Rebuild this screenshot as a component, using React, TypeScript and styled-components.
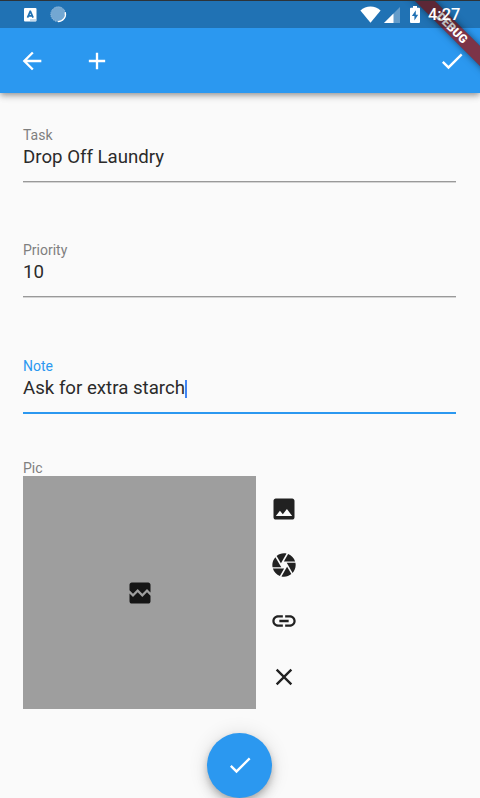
import React from 'react';
import styled, { createGlobalStyle } from 'styled-components';

const GlobalStyle = createGlobalStyle`
  * { box-sizing: border-box; }
  html, body { margin: 0; background: #fafafa; }
  body { font-family: Roboto, "Liberation Sans", sans-serif; overflow: hidden; }
`;

const Screen = styled.div`
  position: relative;
  width: 480px;
  height: 798px;
  overflow: hidden;
  display: flex;
  flex-direction: column;
  background: #fafafa;
`;

const StatusBar = styled.div`
  position: absolute;
  inset: 0 0 auto 0;
  height: 28px;
  display: flex;
  align-items: center;
  padding: 0 19px 0 23.5px;
  border-top: 1px solid #2d3338;
  background: rgba(0, 0, 0, 0.25);
  color: #fff;
  z-index: 3;
  svg { flex: none; display: block; }
`;

const Notifications = styled.div`
  display: flex;
  align-items: center;
  gap: 13px;
  flex: 1;
`;

const Clock = styled.span`
  width: 33px;
  margin-left: 8px;
  font-size: 16.4px;
  font-weight: 500;
  line-height: 20px;
  padding-top: 1px;
  white-space: nowrap;
`;

const AppBar = styled.header`
  flex: none;
  height: 93px;
  padding: 28px 14.5px 0 18px;
  display: flex;
  align-items: center;
  gap: 37px;
  background: #2b98f0;
  color: #fff;
  box-shadow: 0 2px 5px -1px rgba(0, 0, 0, 0.25), 0 4px 6px rgba(0, 0, 0, 0.14),
    0 1px 10px rgba(0, 0, 0, 0.12);
`;

const IconButton = styled.button<{ $end?: boolean }>`
  display: block;
  width: 28px;
  height: 28px;
  padding: 0;
  border: 0;
  background: none;
  color: inherit;
  margin-left: ${(p) => (p.$end ? 'auto' : '0')};
  svg { display: block; }
`;

const Banner = styled.div`
  position: absolute;
  left: 381.7px;
  top: 21.3px;
  width: 140px;
  height: 14px;
  transform: rotate(45deg);
  background: rgba(148, 23, 23, 0.776);
  box-shadow: 0 0 7px rgba(0, 0, 0, 0.5);
  color: #fff;
  font-size: 11.9px;
  font-weight: 900;
  line-height: 15px;
  text-align: center;
  z-index: 2;
`;

const Form = styled.main`
  padding: 34px 24px 0 23px;
`;

const Field = styled.label<{ $focused?: boolean }>`
  display: block;
  height: ${(p) => (p.$focused ? '56px' : '55px')};
  margin-bottom: 60px;
  border-bottom: ${(p) => (p.$focused ? '2px solid #2b98f0' : '1px solid #999')};
  box-shadow: ${(p) => (p.$focused ? 'none' : '0 1px 0 #d4d4d4')};
  color: ${(p) => (p.$focused ? '#2b98f0' : '#7f7f7f')};
  & + & { margin-bottom: 61px; }
`;

const Label = styled.span`
  display: block;
  height: 16px;
  font-size: 14px;
  line-height: 16px;
`;

const Value = styled.span`
  display: flex;
  align-items: center;
  height: 28px;
  font-size: 18.67px;
  line-height: 28px;
  color: #2b2b2b;
`;

const Caret = styled.i`
  width: 2px;
  height: 18px;
  margin-top: 1px;
  background: #4285f4;
`;

const PicSection = styled.section`
  margin-top: -15px;
  color: #7f7f7f;
`;

const PicRow = styled.div`
  display: flex;
`;

const Picture = styled.div`
  width: 233.3px;
  height: 233.3px;
  display: grid;
  place-items: center;
  background: #9e9e9e;
  color: #151515;
`;

const Actions = styled.div`
  display: flex;
  flex-direction: column;
  gap: 28px;
  padding: 18.7px 0 0 13.7px;
  color: #212121;
`;

const Fab = styled.button`
  position: absolute;
  left: 206.9px;
  top: 732.7px;
  width: 65.3px;
  height: 65.3px;
  display: grid;
  place-items: center;
  padding: 0;
  border: 0;
  border-radius: 50%;
  background: #2b98f0;
  color: #fff;
  box-shadow: 0 3px 6px -1px rgba(0, 0, 0, 0.2), 0 7px 12px rgba(0, 0, 0, 0.14),
    0 1px 20px rgba(0, 0, 0, 0.12);
`;

const paths = {
  back: 'M20 11H7.83l5.59-5.59L12 4l-8 8 8 8 1.41-1.41L7.83 13H20v-2z',
  add: 'M19 13h-6v6h-2v-6H5v-2h6V5h2v6h6v2z',
  check: 'M9 16.17L4.83 12l-1.42 1.41L9 19 21 7l-1.41-1.41z',
  image:
    'M21 19V5c0-1.1-.9-2-2-2H5c-1.1 0-2 .9-2 2v14c0 1.1.9 2 2 2h14c1.1 0 2-.9 2-2zM8.5 13.5l2.5 3.01L14.5 12l4.5 6H5l3.5-4.5z',
  broken:
    'M21 5v6.59l-3-3.01-4 4.01-4-4-4 4-3-3.01V5c0-1.1.9-2 2-2h14c1.1 0 2 .9 2 2zm-3 6.42l3 3.01V19c0 1.1-.9 2-2 2H5c-1.1 0-2-.9-2-2v-6.58l3 2.99 4-4 4 4 4-3.99z',
  camera:
    'M9.4 10.5l4.77-8.26C13.47 2.09 12.75 2 12 2c-2.4 0-4.6.85-6.32 2.25l3.66 6.35.06-.1zM21.54 9c-.92-2.92-3.15-5.26-6-6.34L11.88 9h9.66zm.26 1h-7.49l.29.5 4.76 8.25C21 16.97 22 14.61 22 12c0-.69-.07-1.35-.2-2zM8.54 12l-3.9-6.75C3.01 7.03 2 9.39 2 12c0 .69.07 1.35.2 2h7.49l-1.15-2zm-6.08 3c.92 2.92 3.15 5.26 6 6.34L12.12 15H2.46zm11.27 0l-3.9 6.76c.7.15 1.42.24 2.17.24 2.4 0 4.6-.85 6.32-2.25l-3.66-6.35-.93 1.6z',
  link:
    'M3.9 12c0-1.71 1.39-3.1 3.1-3.1h4V7H7c-2.76 0-5 2.24-5 5s2.24 5 5 5h4v-1.9H7c-1.71 0-3.1-1.39-3.1-3.1zM8 13h8v-2H8v2zm9-6h-4v1.9h4c1.71 0 3.1 1.39 3.1 3.1s-1.39 3.1-3.1 3.1h-4V17h4c2.76 0 5-2.24 5-5s-2.24-5-5-5z',
  clear:
    'M19 6.41L17.59 5 12 10.59 6.41 5 5 6.41 10.59 12 5 17.59 6.41 19 12 13.41 17.59 19 19 17.59 13.41 12z',
};

function Icon({ name }: { name: keyof typeof paths }) {
  return (
    <svg width="28" height="28" viewBox="0 0 24 24" fill="currentColor">
      <path d={paths[name]} />
    </svg>
  );
}

function KeyboardNotice() {
  return (
    <svg width="13" height="14" viewBox="0 0 13 14">
      <rect width="12.5" height="13.5" rx="1" fill="#fff" />
      <path d="M3.5 9.7L6.2 3.4h.2l2.7 6.3M4.5 7.8h3.7" fill="none" stroke="#2171b3" strokeWidth="1.7" />
      <path d="M6.5 12h1M8.5 12h1M10.5 12h1" stroke="#2171b3" strokeWidth="1" />
    </svg>
  );
}

function SyncNotice() {
  return (
    <svg width="17" height="17" viewBox="0 0 17 17">
      <circle cx="8.2" cy="8.2" r="7.4" fill="#73a7d2" />
      <circle cx="8.2" cy="8.2" r="7.4" fill="none" stroke="#a6c7e2" strokeDasharray="1 1" />
      <path d="M15.2 6.2A7.4 7.4 0 0 1 8 15.6" fill="none" stroke="#fff" strokeWidth="1.3" />
    </svg>
  );
}

function Wifi() {
  return (
    <svg width="21" height="17" viewBox="0 0 21 17">
      <path d="M.4 4.4C6-.7 15-.7 20.6 4.4L10.5 16.8z" fill="#fff" />
    </svg>
  );
}

function Signal() {
  return (
    <svg width="16" height="16" viewBox="0 0 16 16">
      <path d="M0 16L16 0v16z" fill="#649cca" />
      <path d="M0 16L9.5 6.5V16z" fill="#fff" />
    </svg>
  );
}

function Battery() {
  return (
    <svg width="10" height="17" viewBox="0 0 10 17">
      <path d="M3 0h4v1.8h2q1 0 1 1V16q0 1-1 1H1q-1 0-1-1V2.8q0-1 1-1h2z" fill="#fff" />
      <path d="M5.8 4.3L1.9 10h2.5v4.5L8.2 8.7H5.8z" fill="#2171b3" />
    </svg>
  );
}

const SystemIcons = styled.div`
  display: flex;
  align-items: center;
  & > :nth-child(2) { margin-left: 3px; }
  & > :nth-child(3) { margin-left: 10px; }
`;

const fields = [
  { label: 'Task', value: 'Drop Off Laundry' },
  { label: 'Priority', value: '10' },
  { label: 'Note', value: 'Ask for extra starch', focused: true },
];

const picActions = ['image', 'camera', 'link', 'clear'] as const;

export default function App() {
  return (
    <>
      <GlobalStyle />
      <Screen>
        <AppBar>
          <IconButton aria-label="Back"><Icon name="back" /></IconButton>
          <IconButton aria-label="Add"><Icon name="add" /></IconButton>
          <IconButton aria-label="Save" $end><Icon name="check" /></IconButton>
        </AppBar>
        <Form>
          {fields.map((f) => (
            <Field key={f.label} $focused={f.focused}>
              <Label>{f.label}</Label>
              <Value>
                {f.value}
                {f.focused && <Caret />}
              </Value>
            </Field>
          ))}
          <PicSection>
            <Label>Pic</Label>
            <PicRow>
              <Picture><Icon name="broken" /></Picture>
              <Actions>
                {picActions.map((name) => (
                  <IconButton key={name} aria-label={name}><Icon name={name} /></IconButton>
                ))}
              </Actions>
            </PicRow>
          </PicSection>
        </Form>
        <Fab aria-label="Done"><Icon name="check" /></Fab>
        <Banner>DEBUG</Banner>
        <StatusBar>
          <Notifications>
            <KeyboardNotice />
            <SyncNotice />
          </Notifications>
          <SystemIcons>
            <Wifi />
            <Signal />
            <Battery />
          </SystemIcons>
          <Clock>4:27</Clock>
        </StatusBar>
      </Screen>
    </>
  );
}
